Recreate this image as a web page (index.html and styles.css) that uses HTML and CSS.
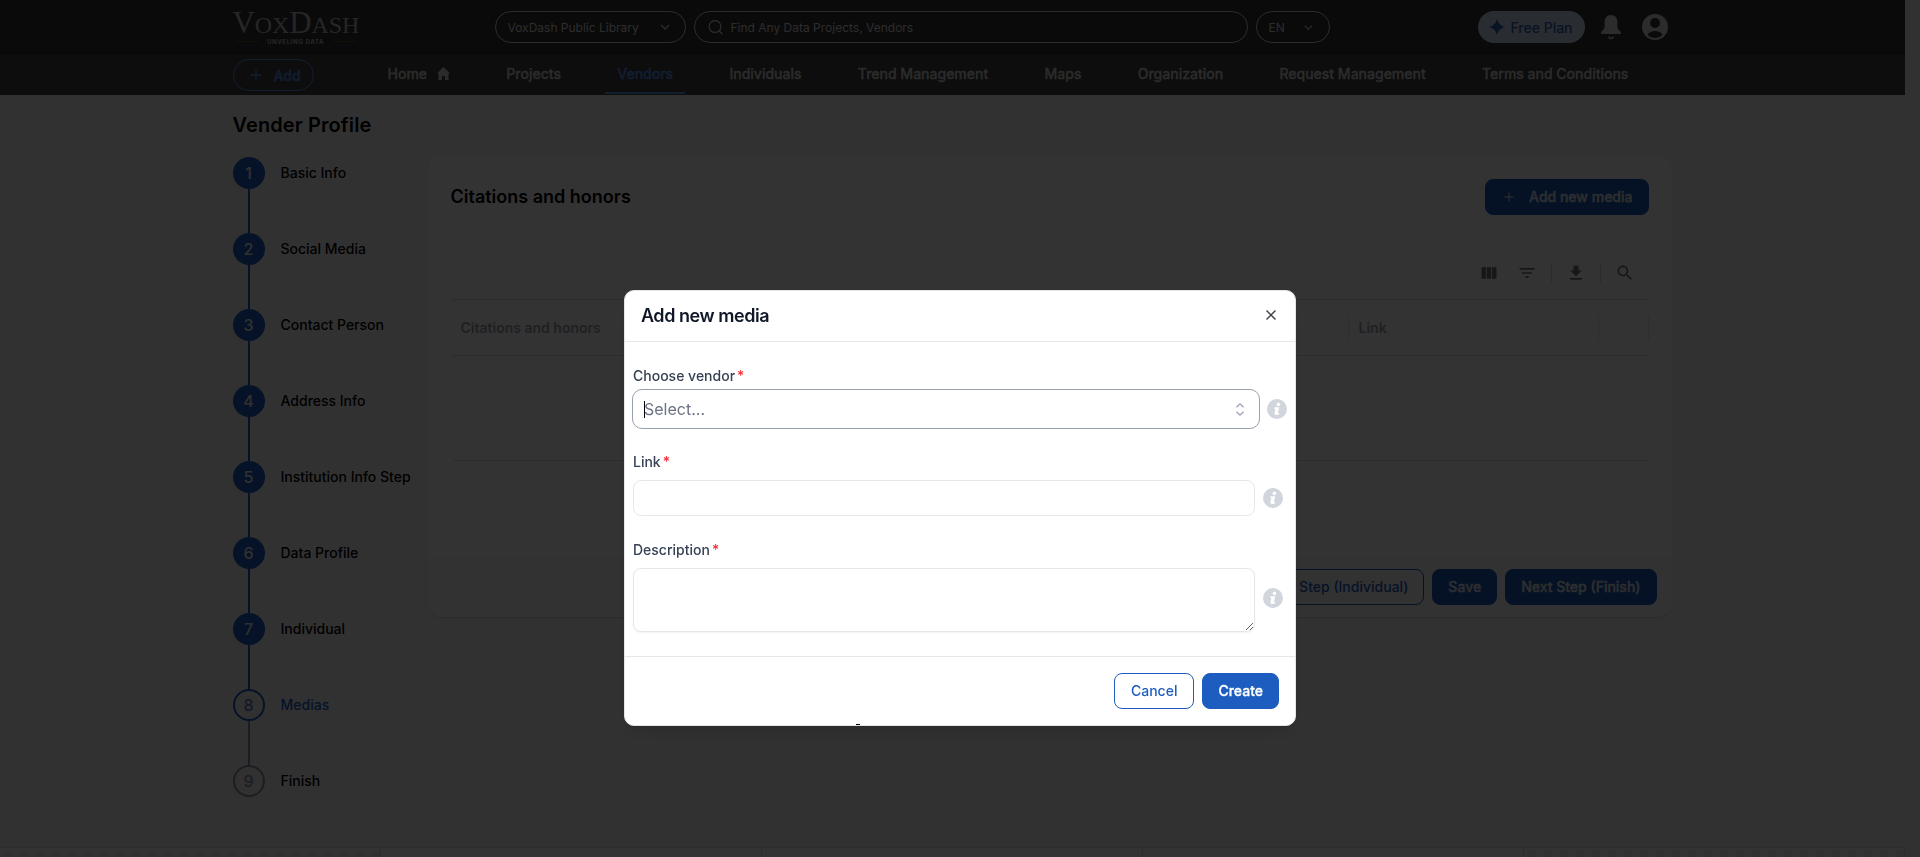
FILE: index.html
```
<!DOCTYPE html>
<html lang="en">
<head>
  <meta charset="UTF-8" />
  <meta name="viewport" content="width=device-width, initial-scale=1.0"/>
  <title>VoxDash - Vender Profile</title>
  <link rel="stylesheet" href="styles.css">
</head>
<body>
  <svg class="sprite" aria-hidden="true">
    <symbol id="chevron" viewBox="0 0 24 24"><path d="M4 8l8 8 8-8" fill="none" stroke="currentColor" stroke-width="2.6"/></symbol>
    <symbol id="plus" viewBox="0 0 24 24"><path d="M12 1v22M1 12h22" fill="none" stroke="currentColor" stroke-width="2.6"/></symbol>
    <symbol id="info" viewBox="0 0 20 20">
      <circle cx="10" cy="10" r="10" fill="#d1d5dc"/>
      <circle cx="11.4" cy="5.4" r="1.8" fill="#fff"/>
      <path d="M7.600 8.300h4.700l-1.500 5.700h1.400v1.300c-1.400.900-4.800 1.200-4.800-.8 0-.6.7-2.900 1-4.600H7.200z" fill="#fff"/>
    </symbol>
  </svg>

  <div class="page">
    <header class="header">
      <div class="wrap topbar">
        <div class="logo">
          <div class="logo-name">V<small>OX</small>D<small>ASH</small></div>
          <div class="logo-tag"><i></i><span>UNVELING DATA</span><i></i></div>
        </div>
        <div class="pill library"><span>VoxDash Public Library</span><svg width="12" height="12"><use href="#chevron"/></svg></div>
        <div class="pill search">
          <svg width="15" height="15" viewBox="0 0 16 16" fill="none" stroke="currentColor" stroke-width="1.3"><circle cx="7.500" cy="7" r="6.300"/><path d="M12 11.500l3.500 3.800"/></svg>
          <span>Find Any Data Projects, Vendors</span>
        </div>
        <div class="pill lang"><span>EN</span><svg width="11" height="11"><use href="#chevron"/></svg></div>
        <div class="free-plan">
          <svg width="16" height="16" viewBox="0 0 16 16"><path d="M8 0q1.600 6.400 8 8q-6.400 1.600-8 8q-1.600-6.400-8-8q6.400-1.600 8-8z" fill="currentColor"/></svg>
          <span>Free Plan</span>
        </div>
        <svg class="bell" width="20" height="25" viewBox="0 0 20 25"><path d="M10 0C5.600 0 3.600 3.300 3.600 7v5c0 2.500-3.600 4-3.600 6 0 .800.500 1 1.200 1h17.600c.700 0 1.200-.200 1.200-1 0-2-3.600-3.500-3.600-6V7c0-3.700-2-7-6.400-7z" fill="currentColor"/><path d="M8 21.500q0 2 2 2t2-2" fill="none" stroke="currentColor" stroke-width="1.500"/></svg>
        <svg class="avatar" width="26" height="26" viewBox="0 0 26 26"><circle cx="13" cy="13" r="13" fill="currentColor"/><circle cx="13" cy="9" r="5" fill="#323232"/><path d="M5.500 21c2-5.300 13-5.300 15 0-4 4-11 4-15 0z" fill="#323232"/></svg>
      </div>
      <div class="navbar">
        <div class="wrap nav">
          <button class="add"><svg width="12" height="12"><use href="#plus"/></svg>Add</button>
          <a>Home <svg width="13" height="13" viewBox="0 0 13 13"><path d="M6.500 0L0 6.500h1.500V13h3.500V9h3v4h3.500V6.500H13z" fill="currentColor"/></svg></a>
          <a>Projects</a>
          <a class="active">Vendors</a>
          <a>Individuals</a>
          <a>Trend Management</a>
          <a>Maps</a>
          <a>Organization</a>
          <a>Request Management</a>
          <a>Terms and Conditions</a>
        </div>
      </div>
    </header>

    <main class="wrap">
      <h1>Vender Profile</h1>
      <div class="profile">
        <ol class="steps">
          <li><b>1</b><span>Basic Info</span></li>
          <li><b>2</b><span>Social Media</span></li>
          <li><b>3</b><span>Contact Person</span></li>
          <li><b>4</b><span>Address Info</span></li>
          <li><b>5</b><span>Institution Info Step</span></li>
          <li><b>6</b><span>Data Profile</span></li>
          <li><b>7</b><span>Individual</span></li>
          <li class="current"><b>8</b><span>Medias</span></li>
          <li class="todo"><b>9</b><span>Finish</span></li>
        </ol>

        <section class="card">
          <div class="card-head">
            <h2>Citations and honors</h2>
            <button class="btn"><svg width="10" height="10"><use href="#plus"/></svg>Add new media</button>
          </div>
          <div class="toolbar">
            <svg width="20" height="20" viewBox="0 0 24 24"><path d="M14.670 5v14H9.330V5zm1 14H21V5h-5.330zm-7.340 0V5H3v14z"/></svg>
            <svg width="20" height="20" viewBox="0 0 24 24"><path d="M10 18h4v-2h-4zM3 6v2h18V6zm3 7h12v-2H6z"/></svg>
            <i></i>
            <svg width="20" height="20" viewBox="0 0 24 24"><path d="M19 9h-4V3H9v6H5l7 7zM5 18v2h14v-2z"/></svg>
            <i></i>
            <svg width="20" height="20" viewBox="0 0 24 24"><path d="M15.500 14h-.790l-.280-.270C15.410 12.590 16 11.110 16 9.500 16 5.910 13.090 3 9.500 3S3 5.910 3 9.500 5.910 16 9.500 16c1.610 0 3.090-.590 4.230-1.570l.270.280v.790l5 4.990L20.490 19zm-6 0C7.010 14 5 11.990 5 9.500S7.010 5 9.500 5 14 7.010 14 9.500 11.990 14 9.500 14z"/></svg>
          </div>
          <div class="grid-head">
            <div>Citations and honors</div>
            <div>Link</div>
            <div></div>
          </div>
          <div class="grid-body"></div>
          <div class="card-foot">
            <button class="btn outline">Prev Step (Individual)</button>
            <button class="btn">Save</button>
            <button class="btn">Next Step (Finish)</button>
          </div>
        </section>
      </div>
    </main>

    <footer class="footer">
      <div class="dots"></div><div></div><div></div><div></div><div class="dots"></div>
    </footer>
  </div>

  <div class="overlay">
    <div class="modal">
      <div class="modal-head">
        <h3>Add new media</h3>
        <svg width="10" height="10" viewBox="0 0 10 10"><path d="M.5.5l9 9M9.500.5l-9 9" stroke="#3f3f46" stroke-width="1.400"/></svg>
      </div>
      <div class="modal-body">
        <label>Choose vendor<em>*</em></label>
        <div class="field select-field">
          <div class="select">
            <span class="caret"></span><span>Select...</span>
            <svg width="8" height="13" viewBox="0 0 8 13" fill="none" stroke="#99a1af" stroke-width="1.300"><path d="M.5 4.200L4 .9l3.500 3.300M.5 8.800L4 12.100l3.500-3.300"/></svg>
          </div>
          <svg width="20" height="20"><use href="#info"/></svg>
        </div>
        <label>Link<em>*</em></label>
        <div class="field">
          <input type="text">
          <svg width="20" height="20"><use href="#info"/></svg>
        </div>
        <label>Description<em>*</em></label>
        <div class="field area-field">
          <textarea></textarea>
          <svg width="20" height="20"><use href="#info"/></svg>
        </div>
      </div>
      <div class="modal-foot">
        <button class="btn outline">Cancel</button>
        <button class="btn">Create</button>
      </div>
      <span class="speck"></span>
    </div>
  </div>
</body>
</html>
```
FILE: styles.css
```
* {
  box-sizing: border-box;
}

body {
  margin: 0;
  font-family: Inter, "Liberation Sans", sans-serif;
  font-size: 14px;
  color: #000;
  background: #f5f5f5;
  overflow: hidden;
}

h1, h2, h3 {
  margin: 0;
  font-weight: 600;
}

button {
  font: inherit;
}

svg {
  flex: none;
}

.sprite {
  position: absolute;
  width: 0;
  height: 0;
}

.page {
  width: 1905px;
  height: 857px;
  display: flex;
  flex-direction: column;
}

.wrap {
  width: 1440px;
  margin: 0 auto;
}

/* header */
.header {
  background: #323232;
  color: #dcdcdc;
}

.topbar {
  height: 55px;
  display: flex;
  align-items: center;
  padding-bottom: 1px;
}

.logo {
  width: 126px;
  margin: -2px 136px 0 0;
  color: #bebebe;
}

.logo-name {
  font-family: "Liberation Serif", serif;
  font-size: 31px;
  line-height: 28px;
  letter-spacing: -0.1px;
  white-space: nowrap;
}

.logo-name small {
  font-size: 24px;
}

.logo-tag {
  display: flex;
  align-items: center;
  justify-content: space-between;
  padding: 0 3px;
  font-size: 6px;
  font-weight: 700;
  line-height: 5px;
  letter-spacing: 0.65px;
}

.logo-tag i {
  width: 23px;
  height: 1px;
  background: #59512f;
}

.pill {
  height: 32px;
  display: flex;
  align-items: center;
  border: 1px solid #dcdcdc;
  border-radius: 16px;
  font-size: 12px;
  margin-right: 8px;
}

.library {
  width: 191px;
  padding: 0 14px 0 12px;
  justify-content: space-between;
}

.search {
  width: 554px;
  padding-left: 13px;
  gap: 8px;
}

.lang {
  width: 74px;
  padding: 0 15px 0 12px;
  justify-content: space-between;
}

.free-plan {
  width: 107px;
  height: 32px;
  margin-left: 140px;
  display: flex;
  align-items: center;
  justify-content: center;
  gap: 5px;
  border-radius: 16px;
  background: #cddcf0;
  color: #2c60b4;
  font-weight: 500;
}

.bell {
  margin-left: 16px;
}

.avatar {
  margin-left: 21px;
}

.navbar {
  background: #414141;
}

.nav {
  height: 40px;
  display: flex;
  font-weight: 500;
  color: #d8d8d8;
  -webkit-text-stroke: 0.3px;
}

.nav a {
  display: flex;
  align-items: center;
  gap: 10px;
  padding: 0 12px 1px;
  margin-right: 32.3px;
  white-space: nowrap;
  border-bottom: 2px solid transparent;
  height: 39px;
}

.nav a:last-child {
  margin-right: 0;
}

.nav a.active {
  color: #5a94ee;
  border-color: #5a94ee;
}

.add {
  flex: none;
  width: 81px;
  height: 32px;
  margin: 4px 62px 0 0;
  display: flex;
  align-items: center;
  gap: 12px;
  padding: 0 0 0 16px;
  border: 1px solid #5a94ee;
  border-radius: 16px;
  background: none;
  color: #5a94ee;
}

/* page content */
h1 {
  font-size: 20px;
  line-height: 28px;
  letter-spacing: 0.1px;
  padding: 16px 0;
}

.profile {
  display: flex;
  align-items: flex-start;
}

.steps {
  list-style: none;
  width: 194px;
  margin: 2px 0 0;
  padding: 0;
}

.steps li {
  position: relative;
  height: 76px;
  display: flex;
  gap: 16px;
  font-weight: 500;
  line-height: 32px;
}

.steps li::after {
  content: "";
  position: absolute;
  left: 15px;
  top: 32px;
  width: 2px;
  height: 44px;
  background: #1a5dc0;
}

.steps b {
  width: 32px;
  height: 32px;
  border-radius: 50%;
  background: #1a5dc0;
  color: #f0f0f0;
  font-size: 16px;
  font-weight: 500;
  text-align: center;
}

.steps .current b {
  background: none;
  border: 2px solid #1a5dc0;
  color: #5a7db8;
  line-height: 28px;
}

.steps .current span {
  color: #1a5dc0;
}

.steps .current::after {
  background: #8793a6;
}

.steps .todo b {
  background: none;
  border: 2px solid #8793a6;
  color: #8793a6;
  line-height: 28px;
}

.steps .todo::after {
  display: none;
}

.card {
  width: 1246px;
  height: 462px;
  display: flex;
  flex-direction: column;
  border-radius: 16px;
  background: #fff;
  box-shadow: 0 1px 2px rgba(0, 0, 0, 0.15);
  overflow: hidden;
}

.card-head {
  display: flex;
  justify-content: space-between;
  align-items: center;
  padding: 24px 24px 0;
}

h2 {
  font-size: 18px;
  padding-bottom: 2px;
}

.btn {
  height: 36px;
  padding: 0 15px 1px;
  border: 1px solid #1c5dbf;
  border-radius: 8px;
  background: #1c5dbf;
  color: #fff;
  font-weight: 500;
  white-space: nowrap;
  -webkit-text-stroke: 0.3px;
}

.btn.outline {
  background: none;
  color: #1c5dbf;
  -webkit-text-stroke: 0;
}

.card .btn {
  color: #e6e6e6;
}

.card .btn.outline {
  color: #1c5dbf;
}

.card-head .btn svg {
  margin: 0 15px 0 3px;
}

.toolbar {
  height: 84px;
  padding: 32px 38px 0 0;
  display: flex;
  justify-content: flex-end;
  fill: #757575;
}

.toolbar svg {
  margin: 16px 0 0 18px;
}

.toolbar svg:nth-child(4),
.toolbar svg:nth-child(6) {
  margin-left: 14px;
}

.toolbar svg + i {
  margin-left: 14px;
}

.toolbar i {
  width: 1px;
  height: 20px;
  margin-top: 16px;
  background: #dadada;
}

.grid-head {
  height: 57px;
  margin: 0 24px;
  display: flex;
  align-items: center;
  border-top: 1px solid #dadada;
  border-bottom: 1px solid #dadada;
  color: #99a1af;
  font-weight: 600;
}

.grid-head div {
  height: 24px;
  line-height: 24px;
  padding-left: 10px;
  border-right: 1px solid #e3e3e3;
}

.grid-head div:nth-child(1) {
  width: 898px;
}

.grid-head div:nth-child(2) {
  width: 250px;
}

.grid-head div:nth-child(3) {
  flex: 1;
}

.grid-body {
  height: 105px;
  margin: 0 26px;
  border-bottom: 1px solid #dadada;
}

.card-foot {
  height: 60px;
  margin-top: auto;
  padding: 12px 16px;
  display: flex;
  justify-content: flex-end;
  gap: 8px;
  background: #fafafa;
}

.footer {
  display: flex;
  height: 10px;
  margin-top: auto;
  background: #fff;
  border-top: 1px solid #e0e0e0;
}

.footer div {
  flex: 1;
  border-right: 1px solid #dcdcdc;
}

.footer .dots {
  background: radial-gradient(circle at 8px 6px, #f0f0f0 4px, transparent 5px) 0 0 / 16px 12px;
}

/* modal */
.overlay {
  position: fixed;
  inset: 0;
  background: rgba(0, 0, 0, 0.8);
  padding: 290px 0 0 624px;
}

.modal {
  position: relative;
  width: 672px;
  height: 436px;
  border: 1px solid #e4e4e7;
  border-radius: 10px;
  background: #fff;
  box-shadow: 0 10px 15px -3px rgba(0, 0, 0, 0.1), 0 4px 6px -4px rgba(0, 0, 0, 0.1);
}

.modal-head {
  height: 51px;
  padding: 0 19px 2px 16px;
  display: flex;
  align-items: center;
  justify-content: space-between;
  border-bottom: 1px solid #e5e7eb;
  color: #101828;
}

h3 {
  font-size: 18px;
  letter-spacing: -0.45px;
}

.modal-body {
  height: 315px;
  padding: 24px 8px 0;
  border-bottom: 1px solid #e5e7eb;
}

label {
  display: block;
  line-height: 20px;
  color: #364153;
  font-weight: 500;
}

label em {
  margin-left: 2px;
  font-style: normal;
  color: #fb2c36;
}

.field {
  display: flex;
  align-items: center;
  gap: 8px;
  margin: 8px 0 24px;
}

.select-field {
  gap: 7px;
  margin: 3px -4px 23px -1px;
}

.area-field svg {
  margin-bottom: 4px;
}

.select {
  width: 628px;
  height: 40px;
  display: flex;
  align-items: center;
  padding: 0 15px 0 11px;
  border: 1.5px solid #99a1af;
  border-radius: 10px;
  font-size: 16px;
  color: #6a7282;
}

.select svg {
  margin-left: auto;
}

.caret {
  width: 1px;
  height: 17px;
  margin-right: -1px;
  background: #000;
}

input,
textarea {
  width: 622px;
  height: 36px;
  border: 1px solid #e5e7eb;
  border-radius: 8px;
  background: #fff;
}

textarea {
  height: 64px;
  box-shadow: 0 1px 2px rgba(0, 0, 0, 0.05);
}

.modal-foot {
  display: flex;
  justify-content: flex-end;
  gap: 8px;
  padding: 16px;
}

.modal-foot .outline {
  padding: 0 16px 1px;
}

/* top of a line cut off by the dialog edge */
.speck {
  position: absolute;
  left: 231px;
  bottom: 0;
  width: 4px;
  height: 1px;
  background: #000;
}
```
